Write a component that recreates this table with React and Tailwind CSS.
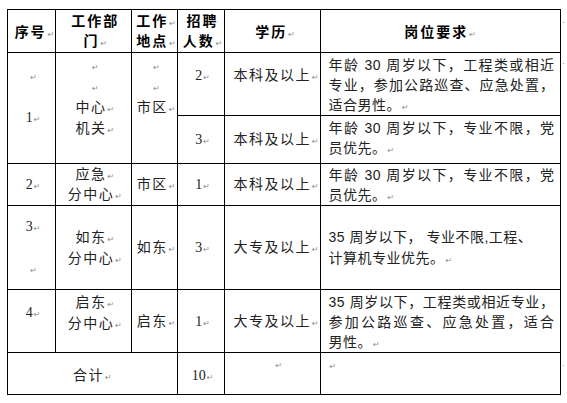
const ret = (
  <span className="font-['DejaVu_Sans',sans-serif] text-[8px] font-normal tracking-normal text-[#8a8a8a] ml-[1px]">↵</span>
);

const Line = ({ children, className = "" }) => (
  <div className={"h-[21px] leading-[21px] whitespace-nowrap " + className}>{children}</div>
);

// tight line for rows that have no room to spare
const T = ({ children, className = "" }) => (
  <div className={"h-[20px] leading-[20px] whitespace-nowrap " + className}>{children}</div>
);

const J = ({ children }) => (
  <div className="h-[20px] leading-[20px] whitespace-nowrap text-justify [text-align-last:justify]">{children}</div>
);

const top = "border border-black align-top p-0";
const mid = "border border-black align-middle p-0";
const cjk = "font-['Liberation_Serif','Noto_Sans_CJK_SC',serif]";
const req = "font-['Liberation_Sans','Noto_Sans_CJK_SC',sans-serif] pl-[8px] pr-[5px] tracking-[0.5px]";

const Dot = ({ pt }) => (
  <td className={"p-0 align-top w-[7px] " + pt}>
    <div className="w-[1px] h-[1px] bg-[#999] ml-[2px]" />
  </td>
);

export default function App() {
  return (
    <div className="w-[567px] h-[403px] bg-white pt-[9px] pl-[7px]">
      <table className={"table-fixed border-collapse text-[14px] text-[#222] " + cjk}>
        <colgroup>
          <col className="w-[48px]" />
          <col className="w-[76px]" />
          <col className="w-[46px]" />
          <col className="w-[47px]" />
          <col className="w-[96px]" />
          <col className="w-[240px]" />
          <col className="w-[7px]" />
        </colgroup>
        <tbody>
          <tr className="h-[43px] font-bold text-black tracking-[2px]">
            <td className={top + " text-center pt-[13px] pl-[6px]"}>
              <T>序号{ret}</T>
            </td>
            <td className={top + " text-center pt-[2px] pl-[4px]"}>
              <T>工作部</T>
              <T>门{ret}</T>
            </td>
            <td className={top + " text-center pt-[2px] pl-[4px]"}>
              <T>工作{ret}</T>
              <T>地点{ret}</T>
            </td>
            <td className={top + " text-center pt-[2px] pl-[4px]"}>
              <T>招聘</T>
              <T>人数{ret}</T>
            </td>
            <td className={top + " text-center pt-[13px] pl-[6px]"}>
              <T>学历{ret}</T>
            </td>
            <td className={top + " text-center pt-[13px]"}>
              <T>岗位要求{ret}</T>
            </td>
            <Dot pt="pt-[12px]" />
          </tr>

          <tr className="h-[63px]">
            <td rowSpan={2} className={top + " text-center pt-[12px] pl-[3px]"}>
              <Line>{ret}</Line>
              <Line />
              <Line>1{ret}</Line>
            </td>
            <td rowSpan={2} className={top + " text-center pt-[2px] tracking-[1.5px] pl-[3px]"}>
              <Line>{ret}</Line>
              <Line>{ret}</Line>
              <Line>中心{ret}</Line>
              <Line>机关{ret}</Line>
            </td>
            <td rowSpan={2} className={top + " text-center pt-[2px] tracking-[1.5px] pl-[4px]"}>
              <Line>{ret}</Line>
              <Line>{ret}</Line>
              <Line>市区{ret}</Line>
            </td>
            <td className={top + " text-center pt-[12px] pl-[4px]"}>
              <Line>2{ret}</Line>
            </td>
            <td className={top + " pt-[12px] pl-[9px] tracking-[1.5px]"}>
              <Line>本科及以上{ret}</Line>
            </td>
            <td className={top + " pt-[2px] " + req}>
              <J>年龄 30 周岁以下，工程类或相近</J>
              <J>专业，参加公路巡查、应急处置，</J>
              <T>适合男性。{ret}</T>
            </td>
            <Dot pt="pt-[10px]" />
          </tr>

          <tr className="h-[48px]">
            <td className={mid + " text-center pl-[4px]"}>
              <Line>3{ret}</Line>
            </td>
            <td className={mid + " pl-[9px] tracking-[1.5px]"}>
              <Line>本科及以上{ret}</Line>
            </td>
            <td className={top + " pt-[2px] " + req}>
              <J>年龄 30 周岁以下，专业不限，党</J>
              <T>员优先。{ret}</T>
            </td>
            <td className="p-0" />
          </tr>

          <tr className="h-[42px]">
            <td className={mid + " text-center pl-[3px]"}>
              <T>2{ret}</T>
            </td>
            <td className={mid + " text-center tracking-[1.5px] pl-[3px]"}>
              <T>应急{ret}</T>
              <T>分中心{ret}</T>
            </td>
            <td className={mid + " text-center tracking-[1.5px] pl-[4px]"}>
              <T>市区{ret}</T>
            </td>
            <td className={mid + " text-center pl-[4px]"}>
              <T>1{ret}</T>
            </td>
            <td className={mid + " pl-[9px] tracking-[1.5px]"}>
              <T>本科及以上{ret}</T>
            </td>
            <td className={mid + " " + req}>
              <J>年龄 30 周岁以下，专业不限，党</J>
              <T>员优先。{ret}</T>
            </td>
            <td className="p-0" />
          </tr>

          <tr className="h-[84px]">
            <td className={mid + " text-center pl-[3px]"}>
              <Line>3{ret}</Line>
              <Line />
              <Line>{ret}</Line>
            </td>
            <td className={mid + " text-center tracking-[1.5px] pl-[3px]"}>
              <Line>如东{ret}</Line>
              <Line>分中心{ret}</Line>
            </td>
            <td className={mid + " text-center tracking-[1.5px] pl-[4px]"}>
              <Line>如东{ret}</Line>
            </td>
            <td className={mid + " text-center pl-[4px]"}>
              <Line>3{ret}</Line>
            </td>
            <td className={mid + " pl-[9px] tracking-[1.5px]"}>
              <Line>大专及以上{ret}</Line>
            </td>
            <td className={mid + " " + req}>
              <Line>35 周岁以下， 专业不限,工程、</Line>
              <Line>计算机专业优先。{ret}</Line>
            </td>
            <td className="p-0" />
          </tr>

          <tr className="h-[63px]">
            <td className={top + " text-center pt-[12px] pl-[3px]"}>
              <Line>4{ret}</Line>
            </td>
            <td className={top + " text-center pt-[2px] tracking-[1.5px] pl-[3px]"}>
              <Line>启东{ret}</Line>
              <Line>分中心{ret}</Line>
            </td>
            <td className={mid + " text-center tracking-[1.5px] pl-[4px]"}>
              <Line>启东{ret}</Line>
            </td>
            <td className={mid + " text-center pl-[4px]"}>
              <Line>1{ret}</Line>
            </td>
            <td className={mid + " pl-[9px] tracking-[1.5px]"}>
              <Line>大专及以上{ret}</Line>
            </td>
            <td className={top + " pt-[2px] " + req}>
              <J>35 周岁以下，工程类或相近专业，</J>
              <J>参加公路巡查、应急处置，适合</J>
              <T>男性。{ret}</T>
            </td>
            <td className="p-0" />
          </tr>

          <tr className="h-[42px]">
            <td colSpan={3} className={top + " text-center pt-[13px] tracking-[1.5px]"}>
              <T>合计{ret}</T>
            </td>
            <td className={top + " text-center pt-[13px] pl-[4px]"}>
              <T>10{ret}</T>
            </td>
            <td className={top + " pt-[1px] pl-[50px]"}>
              <T>{ret}</T>
            </td>
            <td className={top + " pt-[2px] pl-[8px]"}>
              <T>{ret}</T>
            </td>
            <Dot pt="pt-[12px]" />
          </tr>
        </tbody>
      </table>
    </div>
  );
}
